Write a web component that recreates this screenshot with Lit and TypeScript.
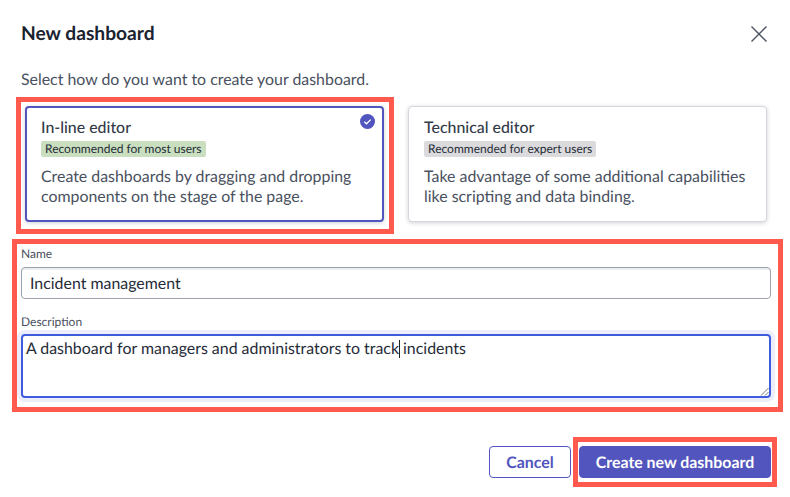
import { LitElement, html, css } from "lit";
import { customElement } from "lit/decorators.js";

@customElement("app-root")
export class AppRoot extends LitElement {
  static styles = css`
    :host { display: block; width: 790px; height: 497px; background: #fff; font-family: Lato, sans-serif; color: #3f4756; overflow: hidden; text-rendering: geometricPrecision; }
    .dialog { display: flex; flex-direction: column; padding: 0 19px 0 21px; height: 497px; box-sizing: border-box; }
    .head { display: flex; justify-content: space-between; align-items: center; height: 34px; margin-top: 17px; }
    h1 { margin: 0; font-size: 19.2px; line-height: 34px; font-weight: 700; color: #1b2330; }
    .close { display: block; margin: 0 4px 1px 0; }
    .intro { margin: 19px 0 0; font-size: 15.9px; line-height: 20px; color: #4a5160; }
    .cards { position: relative; display: grid; grid-template-columns: 359px 359px; gap: 24px; margin: 16px 4px 0; }
    .card { position: relative; box-sizing: border-box; height: 116px; padding: 11px 15px; border: 1px solid #d5d7de; border-radius: 4px; background: #fff; box-shadow: 0 1px 4px rgba(40,45,60,.22); }
    .card.sel { border: 2px solid #5155bd; padding: 10px 14px; }
    .title { font-size: 15.9px; line-height: 20px; font-weight: 500; color: #333a48; }
    .badge { display: inline-block; margin-top: 3px; padding: 0 4px; border-radius: 2px; font-size: 12px; line-height: 16px; color: #262c38; vertical-align: top; }
    .green { background: #c9dfbf; }
    .grey { background: #dbdbdd; }
    .desc { margin-top: 10px; font-size: 15.9px; line-height: 20px; color: #4a5160; }
    .check { position: absolute; top: 6px; right: 7px; }
    .fields { position: relative; margin-top: 24px; display: flex; flex-direction: column; }
    label { font-size: 12px; line-height: 16px; color: #4a5160; display: block; }
    .input { box-sizing: border-box; margin-top: 5px; height: 32px; padding: 0 8px; border: 1px solid #9ea2ad; border-radius: 4px; font-size: 15.9px; line-height: 32px; color: #262c38; box-shadow: inset 0 2px 0 #ecedf1; }
    .desc-label { margin-top: 15px; }
    .area { position: relative; box-sizing: border-box; margin-top: 4px; height: 64px; padding: 3px 3px; border: 2px solid #3f5bde; border-radius: 4px; font-size: 15.9px; line-height: 20px; color: #262c38; box-shadow: 0 0 0 4px #eceefb; }
    .caret { display: inline-block; width: 1px; height: 18px; background: #222; vertical-align: -4px; margin-right: -1px; }
    .grip { position: absolute; right: 0; bottom: 0; }
    .actions { display: flex; justify-content: flex-end; gap: 8px; margin-top: 48px; }
    .btn { box-sizing: border-box; height: 32px; border-radius: 4px; font-size: 15.9px; font-weight: 700; line-height: 32px; text-align: center; }
    .cancel { width: 82px; border: 1px solid #5155bd; color: #5155bd; background: #fff; }
    .primary { position: relative; width: 192px; border: 1px solid #5155bd; color: #fff; background: #5155bd; }
    .mark::after { content: ""; position: absolute; border: 5px solid #ff5a4d; pointer-events: none; }
    .cards.mark::after { left: -9px; top: -9px; width: 368px; height: 127px; }
    .fields.mark::after { left: -9px; right: -12px; top: -7px; bottom: -14px; }
    .primary.mark::after { left: -7px; right: -7px; top: -10px; bottom: -10px; }
  `;

  render() {
    return html`
      <div class="dialog">
        <div class="head">
          <h1>New dashboard</h1>
          <svg class="close" width="16" height="16" viewBox="0 0 16 16" fill="none" stroke="#4a5160" stroke-width="1.4"><path d="M.5.5 15.500 15.500M15.500.5.5 15.500"/></svg>
        </div>
        <p class="intro">Select how do you want to create your dashboard.</p>
        <div class="cards mark">
          <div class="card sel">
            <div class="title">In-line editor</div>
            <span class="badge green">Recommended for most users</span>
            <div class="desc">Create dashboards by dragging and dropping components on the stage of the page.</div>
            <svg class="check" width="15" height="15" viewBox="0 0 15 15"><circle cx="7.500" cy="7.500" r="7.500" fill="#5155bd"/><path d="M4.300 7.800 6.500 9.800 10.700 5.600" fill="none" stroke="#fff" stroke-width="1.300"/></svg>
          </div>
          <div class="card">
            <div class="title">Technical editor</div>
            <span class="badge grey">Recommended for expert users</span>
            <div class="desc">Take advantage of some additional capabilities like scripting and data binding.</div>
          </div>
        </div>
        <div class="fields mark">
          <label>Name</label>
          <div class="input">Incident management</div>
          <label class="desc-label">Description</label>
          <div class="area">A dashboard for managers and administrators to track<span class="caret"></span> incidents
            <svg class="grip" width="9" height="9" viewBox="0 0 9 9" fill="none" stroke="#555" stroke-width=".8"><path d="M1 8.500 8.500 1M5 8.500 8.500 5"/></svg>
          </div>
        </div>
        <div class="actions">
          <div class="btn cancel">Cancel</div>
          <div class="btn primary mark">Create new dashboard</div>
        </div>
      </div>
    `;
  }
}
